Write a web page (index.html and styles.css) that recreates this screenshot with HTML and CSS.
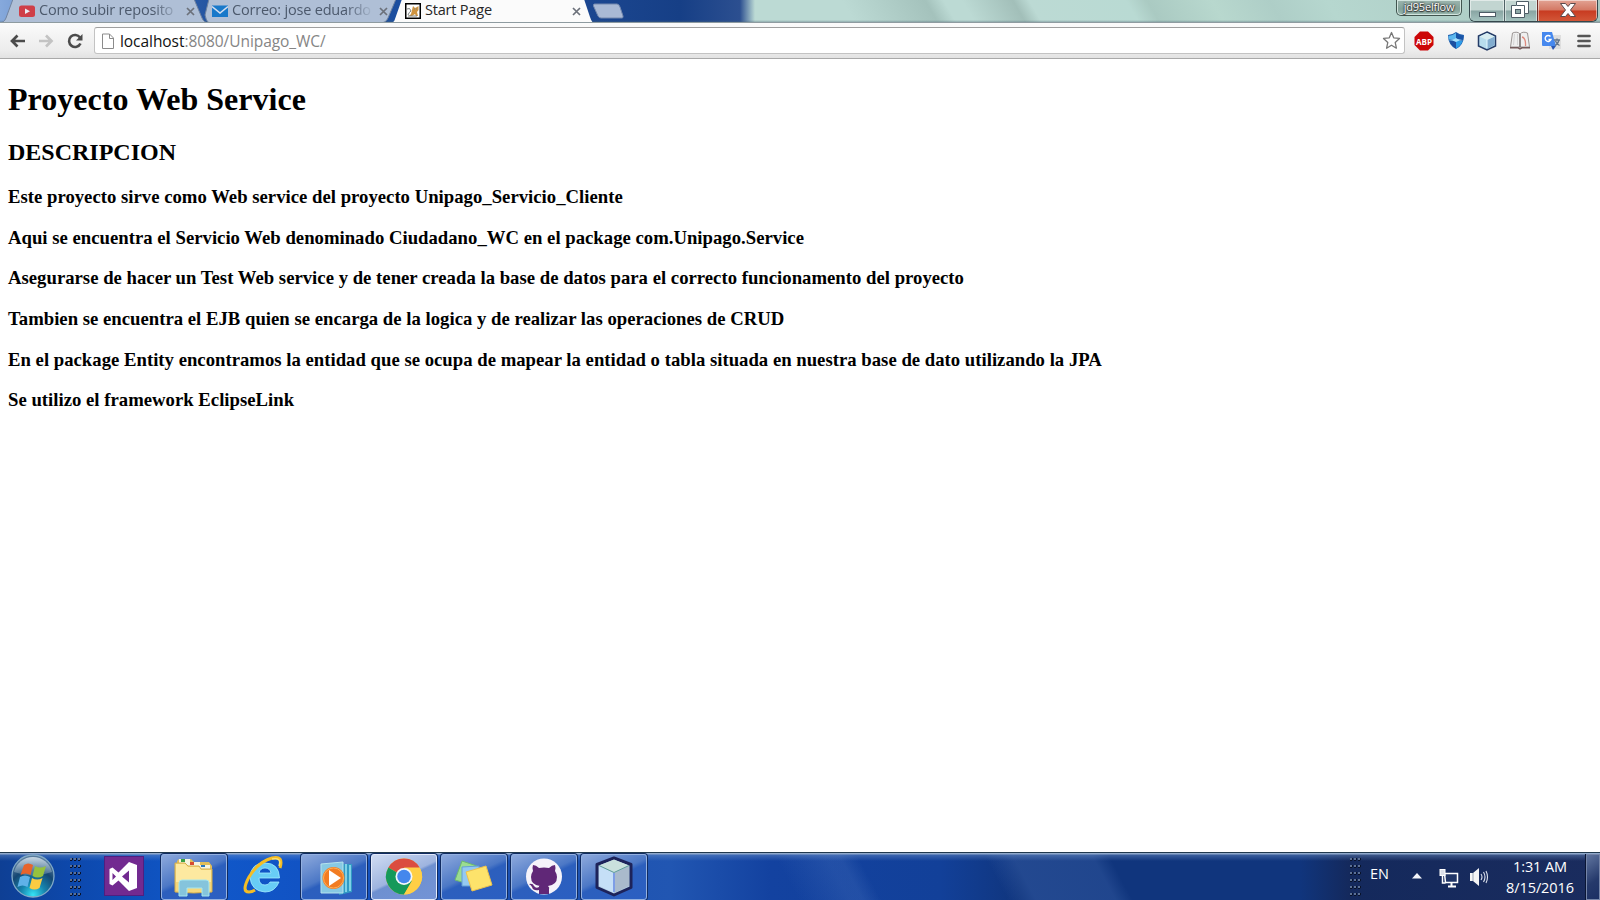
FILE: index.html
```html
<!DOCTYPE html>
<html lang="es">
<head>
<meta charset="utf-8">
<title>Start Page</title>
<link rel="stylesheet" href="styles.css">
</head>
<body>
<div class="desktop">
  <header class="titlebar">
    <div class="tabs">
      <div class="tab tab-one">
        <svg class="tab-shape" width="206" height="23"><path class="shape-idle" d="M-1 23Q4 23 6 18L13 -1H194L202 18Q204 23 209 23Z"/></svg>
        <svg class="fav" width="16" height="16"><rect y="2.500" width="16" height="11.500" rx="2.500" fill="#cf3f49"/><path d="M6 5.500v5.500l5-2.750z" fill="#e9edf5"/></svg>
        <span class="tab-text faded">Como subir reposito</span>
        <svg class="close" width="9" height="9"><path d="M1 1l7 7M8 1l-7 7"/></svg>
      </div>
      <div class="tab tab-two">
        <svg class="tab-shape" width="194" height="23"><path class="shape-idle" d="M5 23Q2 21 1 15L5 -1H192L184 18Q182 23 176 23Z"/></svg>
        <svg class="fav" width="16" height="16"><rect y="2.500" width="16" height="11.500" fill="#1979ca"/><path d="M0 3.500l8 6.500l8-6.500" fill="none" stroke="#d3def0" stroke-width="1.600"/></svg>
        <span class="tab-text faded">Correo: jose eduardo</span>
        <svg class="close" width="9" height="9"><path d="M1 1l7 7M8 1l-7 7"/></svg>
      </div>
      <div class="tab tab-active">
        <svg class="tab-shape" width="206" height="24"><path class="shape-active" d="M-1 23Q3 23 4 19L11 -1H193L199 17Q201 23 203 23V24H-1Z"/></svg>
        <svg class="fav" width="16" height="16"><rect x=".75" y=".75" width="14.500" height="14.500" fill="#fff" stroke="#000" stroke-width="1.500"/><path d="M7 7l1-4l2 2l2-1l1.500-1v4l-1.500 2l1 4h-2l-1-2l-3 2H4l2-2z" fill="#cf9440"/><path d="M2 6q3-2 4 2q-2 1-3 4M3 13h9M9 6h1M11 6h1" stroke="#7b8180" fill="none"/></svg>
        <span class="tab-text">Start Page</span>
        <svg class="close" width="9" height="9"><path d="M1 1l7 7M8 1l-7 7"/></svg>
      </div>
      <svg class="new-tab" width="32" height="16"><path d="M2.500 1H25q2 0 3 3l3 9q.5 2-1 2H9q-2 0-3-2L1.500 3q-.5-2 1-2z" fill="#a9b9d5" stroke="#7287ad"/></svg>
    </div>
    <div class="user">jd95elflow</div>
    <div class="controls">
      <div class="ctl min"><svg width="34" height="22"><rect x="9.500" y="12.500" width="16" height="4" fill="#fff" stroke="#4d5c66"/></svg></div>
      <div class="ctl max"><svg width="34" height="22"><path fill-rule="evenodd" d="M11.500 1.500h12v12h-4v4h-13v-12h5z" fill="#fff" stroke="#4d5c66"/><rect x="10.500" y="9.500" width="5" height="4" fill="#8fa9a8" stroke="#4d5c66"/><path d="M12 5.500h7.500v8" fill="none" stroke="#4d5c66"/></svg></div>
      <div class="ctl shut"><svg width="58" height="22"><path d="M22.500 3.500h5l2.500 3l2.500-3h5l-5 6.500l5 6.500h-5l-2.500-3l-2.500 3h-5l5-6.500z" fill="#fff" stroke="#5b4a4c"/></svg></div>
    </div>
  </header>

  <nav class="toolbar">
    <svg class="nav-icon" width="16" height="16"><path d="M16 8H3M8.500 2.500L3 8l5.500 5.500" fill="none" stroke="#4b4b4b" stroke-width="2.700"/></svg>
    <svg class="nav-icon" width="16" height="16"><path d="M1 8h12M8 2.500L13.500 8L8 13.500" fill="none" stroke="#c3c3c3" stroke-width="2.700"/></svg>
    <svg class="nav-icon" width="16" height="16"><path d="M13 4.500A6 6 0 1 0 13.500 10.500" fill="none" stroke="#4b4b4b" stroke-width="2.600"/><path d="M15.500 1v6.500H9z" fill="#4b4b4b"/></svg>
    <div class="address">
      <svg width="12" height="16"><path d="M.5 1h7l4 4v10.500H.5z" fill="#fff" stroke="#8b8b8b"/><path d="M7.500 1v4.500h4" fill="none" stroke="#8b8b8b"/></svg>
      <span class="url"><span class="host">localhost</span>:8080/Unipago_WC/</span>
      <svg class="star" width="19" height="19"><path d="M9.500 1.500l2.200 5.300l5.800.6l-4.300 4l1.200 5.800l-4.900-3l-4.900 3l1.200-5.800l-4.300-4l5.800-.6z" fill="#fff" stroke="#777" stroke-width="1.300" stroke-linejoin="round"/></svg>
    </div>
    <div class="extensions">
      <svg width="20" height="20"><path d="M6 0.500h8l5.500 5.500v8L14 19.500H6L.5 14V6z" fill="#cc0708"/><text x="10" y="13.500" text-anchor="middle" textLength="16" lengthAdjust="spacingAndGlyphs" class="abp">ABP</text></svg>
      <svg width="18" height="19"><path d="M9 1q4 3 8 3q0 10-8 14q-8-4-8-14q4 0 8-3z" fill="#1f5fae"/><path d="M9 2q-4 3-7.500 3q0 2 .5 3.500h7z" fill="#5cb8ee"/><path d="M9 2v6.500h7q.5-2 .5-3.500Q12 5 9 2z" fill="#1a55a8"/><path d="M3 10h6v7.500Q4 15 3 10z" fill="#1d4fa0"/><path d="M9 10h6.500Q14 15 9 17.500z" fill="#2e9ce8"/><path d="M0 9q6 0 9-2q3 2 9 2q-6 0-9 2q-3-2-9-2z" fill="#a6e0fc"/></svg>
      <svg width="20" height="20"><path d="M10 1l8.500 4v10L10 19l-8.500-4V5z" fill="#b8dced" stroke="#243b67" stroke-width="1.500"/><path d="M10 9v9l7.500-4V5.500z" fill="#83adcf"/><path d="M2.500 5.500L10 9l7.500-3.500L10 2z" fill="#d9edf1"/><path d="M10 9v8" stroke="#e4f7ff"/></svg>
      <svg width="20" height="19"><path d="M2.500 2q5-2 7.500 1q2.500-3 7.500-1l2 14H.5z" fill="#efefef" stroke="#9b9594"/><path d="M10 3v13" stroke="#706968" stroke-width="1.500"/><path d="M0 16.800h8l2 1l2-1h8" fill="none" stroke="#755b5b" stroke-width="1.600"/><path d="M12 6q4 1 3.500 9" fill="none" stroke="#df8a7d" stroke-width="1.300"/><path d="M4.500 3l-1 11M7.500 3v11" stroke="#d4d4d4"/></svg>
      <svg width="19" height="20"><rect x="7" y="4" width="12" height="14" fill="#dedede"/><path d="M0 1h10l4 14H1q-1 0-1-1z" fill="#4688ee"/><path d="M9 15h5l-3 4z" fill="#2957b4"/><path d="M8.500 5.500a3 3 0 1 0 .5 3H6.500" fill="none" stroke="#fff" stroke-width="1.400"/><path d="M12 9h6M15 7.500v1.500M17 9q-1 4-4 5.500M13.500 10q1 3 4 4.500" stroke="#63758b" fill="none" stroke-width="1.300"/></svg>
      <svg class="menu" width="14" height="14"><path d="M1.500 2h11M1.500 7h11M1.500 12h11" stroke="#555" stroke-width="2.700" stroke-linecap="round"/></svg>
    </div>
  </nav>

  <main class="page">
    <h1>Proyecto Web Service</h1>
    <h2>DESCRIPCION</h2>
    <h3>Este proyecto sirve como Web service del proyecto Unipago_Servicio_Cliente</h3>
    <h3>Aqui se encuentra el Servicio Web denominado Ciudadano_WC en el package com.Unipago.Service</h3>
    <h3>Asegurarse de hacer un Test Web service y de tener creada la base de datos para el correcto funcionamento del proyecto</h3>
    <h3>Tambien se encuentra el EJB quien se encarga de la logica y de realizar las operaciones de CRUD</h3>
    <h3>En el package Entity encontramos la entidad que se ocupa de mapear la entidad o tabla situada en nuestra base de dato utilizando la JPA</h3>
    <h3>Se utilizo el framework EclipseLink</h3>
  </main>

  <footer class="taskbar">
    <svg class="orb" width="46" height="46" viewBox="0 0 46 46">
      <defs>
        <radialGradient id="orb" cx=".5" cy=".95" r=".85"><stop offset="0" stop-color="#35e3f5"/><stop offset=".35" stop-color="#1683ad"/><stop offset=".7" stop-color="#154672"/><stop offset="1" stop-color="#577b9d"/></radialGradient>
        <linearGradient id="shine" x2="0" y2="1"><stop offset="0" stop-color="#dbe7ef" stop-opacity=".85"/><stop offset="1" stop-color="#8eabc2" stop-opacity=".35"/></linearGradient>
      </defs>
      <circle cx="23" cy="23" r="21" fill="url(#orb)" stroke="#82aac6" stroke-width="1.300"/>
      <path d="M4 19a19.500 19.500 0 0 1 38 0q-19 7-38 0z" fill="url(#shine)"/>
      <path d="M14 12q4-3 9 0l-2.500 10q-5-3-10 0z" fill="#e8642b"/>
      <path d="M25 13q5 3 11 0l-3 10q-5 3-10.500 0z" fill="#96c13e"/>
      <path d="M10 24q5-3 10 0l-2.500 10q-5-3-10 0z" fill="#5fb1e8"/>
      <path d="M22 25q5 3 10.500 0l-3 10q-5 3-10 0z" fill="#fbcb42"/>
    </svg>
    <div class="grip grip-left"></div>
    <svg class="vs" width="40" height="40"><rect width="40" height="40" fill="#722a90"/><rect x=".5" y=".5" width="39" height="39" fill="none" stroke="#4f1f80"/><path d="M25 6l8 3v23l-8 3l-10.500-10.500l-6 5l-3-1.500V13l3-1.500l6 5zM25 14.500l-7 6l7 6zM8.500 17v7l3.500-3.500z" fill="#fff" fill-rule="evenodd"/></svg>

    <div class="apps">
      <div class="app open"><svg width="42" height="42" viewBox="0 0 42 42"><path d="M4 6l2-2h12l3 3h15l3 4v25H4z" fill="#e1bd58"/><path d="M6 4h11v8H6zM15 7h12v8H15zM25 10h12v8H25z" fill="#f7f4df"/><path d="M8 4h4v3H8z" fill="#38a043"/><path d="M17 7h4v3h-4z" fill="#d64b32"/><path d="M28 10h4v2h-4z" fill="#2776bd"/><path d="M2 8h10l3 3h11l2 3h11v23q-18 2-37 0z" fill="#f5d77b" stroke="#d4ae4d"/><path d="M3 9h9l3 3h11l2 3h10v12H3z" fill="#ffedaa" opacity=".8"/><path d="M6 28q0-3 3-3h24q3 0 3 3v13h-7v-8H14v8H6z" fill="#85c4dc" stroke="#a6e6ef"/></svg></div>
      <div class="app"><svg width="42" height="42" viewBox="0 0 42 42"><path d="M36 28q-4 10-14 10Q8 37 7 23Q8 9 22 9q14 0 14.500 15H16q0 7 6 7q4 0 5-3zM16 19h12q-1-5-6-5t-6 5z" fill="#68cdf5" fill-rule="evenodd" stroke="#a2ecff" stroke-width=".8"/><path d="M37 14Q41 1 29 4Q15 8 6 23Q-2 38 6 38q3 0 6-2" fill="none" stroke="#f4bd25" stroke-width="3"/><path d="M36 12Q39 3 29 5" fill="none" stroke="#ffe36d" stroke-width="1.500"/></svg></div>
      <div class="app open"><svg width="42" height="42" viewBox="0 0 42 42"><path d="M26 9h13v28l-13 3z" fill="#329ac4"/><path d="M29 8v29M33 9v28M37 10v26" stroke="#87d7eb" stroke-width="1.800"/><path d="M8 9l22-2v31H8z" fill="#87c9e3" stroke="#b5e2ed"/><circle cx="20.500" cy="23" r="11" fill="#f27c22"/><circle cx="20.500" cy="23" r="10" fill="none" stroke="#ffae54"/><path d="M16 15v16l12-8z" fill="#fff"/></svg></div>
      <div class="app open current"><svg width="42" height="42" viewBox="0 0 42 42"><circle cx="21" cy="21.500" r="18" fill="#ffcd40"/><path d="M21 21.500L5.400 12.500A18 18 0 0 1 36.600 12.500z" fill="#db4c3f"/><path d="M21 21.500L5.400 12.500A18 18 0 0 0 21 39.500l8-14z" fill="#15995a"/><path d="M21 12.500h15.600A18 18 0 0 1 21 39.500l8-13z" fill="#ffcf46"/><circle cx="21" cy="21.500" r="8.500" fill="#f5f7fa"/><circle cx="21" cy="21.500" r="6.800" fill="#4487ed"/></svg></div>
      <div class="app open"><svg width="42" height="42" viewBox="0 0 42 42"><path d="M9 6l15 5l-5 19l-17-5z" fill="#9bdc91" stroke="#6cb96f"/><path d="M9 12l17-1l1 20l-18 0z" fill="#94c9f2" stroke="#639ed5"/><path d="M13 17l20-6l6 19l-20 6z" fill="#fde36b" stroke="#eec24c"/></svg></div>
      <div class="app open"><svg width="42" height="42" viewBox="0 0 42 42"><circle cx="21" cy="21.500" r="18" fill="#f5f3fa"/><path d="M10 10q3 0 6 3q5-1 10 0q3-3 6-3q1 3 0 6q2 3 2 6q0 8-9 9q2 2 1 3v5H16v-4q-6 1-7-3q-1-2-3-3q4-1 5 2q2 3 5 1q0-2 1-1q-9-1-9-9q0-3 2-6q-1-3 0-6z" fill="#602777"/></svg></div>
      <div class="app open"><svg width="42" height="42" viewBox="0 0 42 42"><path d="M21 3l17 6.500v23L21 40L4 32.500v-23z" fill="#adc9df" stroke="#1d235a" stroke-width="3" stroke-linejoin="round"/><path d="M6 10.500l15-6l15 6l-15 7z" fill="#cae1dd"/><path d="M6 11l15 7v20L6 31z" fill="#c5dff7"/><path d="M36 11l-15 7v20l15-7z" fill="#a9bacc"/><path d="M6 10.500l15 7l15-7" fill="none" stroke="#5f9d99"/><path d="M21 18v19" stroke="#7d9de6" stroke-width="2"/></svg></div>
    </div>

    <div class="tray">
      <div class="grip"></div>
      <span class="lang">EN</span>
      <svg class="up" width="10" height="6"><path d="M5 0l5 5.500H0z" fill="#f4f5fa"/></svg>
      <svg class="network" width="20" height="20"><path d="M5.500 5.500h13v9h-12z" fill="#203566" stroke="#fff" stroke-width="1.500"/><path d="M9 18.500h8M12.500 15v3" stroke="#fff" stroke-width="2"/><rect x="1" y="1.500" width="5" height="6" fill="#dce0e9" stroke="#fff"/><path d="M3.500 8v7h3" fill="none" stroke="#fff" stroke-width="1.500"/></svg>
      <svg class="speaker" width="20" height="20"><path d="M1 6h3l6-5v18l-6-5H1z" fill="#f4f4f5"/><path d="M4 6v8" stroke="#9ba6b6"/><path d="M12 7q2 3 0 6M14.500 5q3 5 0 10M17 4q3 6 0 12" fill="none" stroke="#dbe0ec" stroke-width="1.100"/></svg>
      <div class="clock"><span>1:31 AM</span><span>8/15/2016</span></div>
      <div class="peek"></div>
    </div>
  </footer>
</div>
</body>
</html>
```
FILE: styles.css
```css
* { box-sizing: border-box; }
body { margin: 0; background: #fff; }
svg { display: block; flex: none; }

.desktop {
  width: 1600px;
  height: 900px;
  display: flex;
  flex-direction: column;
  overflow: hidden;
}

/* window frame */
.titlebar {
  height: 23px;
  flex: none;
  display: flex;
  align-items: flex-start;
  overflow: hidden;
  border-bottom: 1px solid #8e9ba0;
  font-family: "Open Sans", "Noto Sans", sans-serif;
  background:
    linear-gradient(to bottom, transparent 20px, rgba(80, 105, 120, .4) 22px),
    linear-gradient(to right, #86a9dc 0, #5c86c4 60px, #20519f 220px, #1c4e9f 410px, #1b4690 590px, #163f86 680px, #2c4f90 740px, transparent 755px),
    linear-gradient(60deg, #bcdad4 740px, #a4c2bc 812px, #bcdad4 828px, #bcdad4 844px, #a2bfb9 888px, #bcdad4 902px, #b9dad3 986px, #aacac2 1004px, #b8d8ce 1060px, #aecec7 1110px, #b6d7cf 1160px, #a9c7c0 1390px);
}
.tabs { display: flex; flex: 1; height: 23px; }
.tab {
  position: relative;
  height: 23px;
  display: flex;
  align-items: flex-start;
  flex: none;
}
.tab-one { width: 204px; padding-left: 19px; z-index: 1; }
.tab-two { width: 187px; padding-left: 8px; }
.tab-active { width: 201px; padding-left: 14px; z-index: 2; }
.tab-shape { position: absolute; left: 0; top: 0; overflow: visible; }
.shape-idle { fill: #afbfd6; stroke: #71839f; stroke-width: 1; }
.shape-active { fill: #fbfbfb; }
.fav { position: relative; margin-top: 3px; }
.tab-text {
  position: relative;
  margin-left: 4px;
  height: 22px;
  font-size: 14.5px;
  letter-spacing: -.2px;
  line-height: 20px;
  color: #262626;
  white-space: nowrap;
  width: 142px;
}
.tab-one .tab-text, .tab-two .tab-text { color: #4c596c; }
.tab-active .tab-text { width: 147px; }
.faded { -webkit-mask-image: linear-gradient(to right, #000 80%, transparent 100%); mask-image: linear-gradient(to right, #000 80%, transparent 100%); }
.close { position: relative; margin: 7px 0 0 5px; }
.close path { stroke: #6c717a; stroke-width: 1.7; }
.tab-active .close { margin-left: 0; }
.new-tab { margin: 3px 0 0 0; }

.user {
  width: 66px;
  height: 16px;
  margin-right: 7px;
  border: 1px solid #41554f;
  border-top: 0;
  border-radius: 0 0 5px 5px;
  box-shadow: inset 0 0 0 1px #d3e5df;
  background: linear-gradient(#9db5ae, #83a299 60%, #9dbbb2);
  font-size: 11px;
  letter-spacing: -.2px;
  line-height: 13px;
  text-align: center;
  color: #fff;
  text-shadow: 0 0 2px #222, 0 0 2px #333, 0 1px 1px #333;
}
.controls {
  display: flex;
  width: 129px;
  height: 22px;
  margin-right: 2px;
  border: 1px solid #35474c;
  border-top: 0;
  border-radius: 0 0 6px 6px;
  overflow: hidden;
}
.ctl { height: 22px; flex: none; box-shadow: inset 0 0 0 1px rgba(255, 255, 255, .5); }
.min { width: 34px; background: linear-gradient(#c2d5d1 45%, #89a5a3 50%, #a6c5c1); }
.max { width: 33px; background: linear-gradient(#c2d5d1 45%, #89a5a3 50%, #a6c5c1); border-left: 1px solid #4f6266; }
.shut { width: 60px; background: linear-gradient(#e2a394, #d47965 45%, #c83b21 50%, #d3593a); border-left: 1px solid #6d2c27; }

/* browser toolbar */
.toolbar {
  height: 36px;
  flex: none;
  display: flex;
  align-items: center;
  padding: 0 9px 0 9px;
  background: linear-gradient(#fbfbfb, #ececec 80%, #e2e2e2);
  border-bottom: 1px solid #a9a9a9;
}
.nav-icon { margin-right: 13px; }
.address {
  width: 1311px;
  height: 27px;
  margin-left: -2px;
  display: flex;
  align-items: center;
  padding: 0 3px 0 7px;
  background: #fff;
  border: 1px solid #c3c3c3;
  border-top-color: #9f9f9f;
  border-radius: 3px;
}
.url {
  flex: 1;
  margin-left: 6px;
  font: 15.5px/24px "Open Sans", "Noto Sans", sans-serif;
  letter-spacing: -.06px;
  color: #858585;
}
.host { color: #111; }
.extensions {
  flex: 1;
  display: flex;
  align-items: center;
  gap: 12.5px;
  padding-left: 9px;
}
.menu { margin-left: 3px; }
.abp { font: bold 9.5px "Open Sans", sans-serif; fill: #fff; }

/* document */
.page {
  flex: 1;
  padding: 0 8px;
  overflow: hidden;
  font-family: "Liberation Serif", "Times New Roman", serif;
  color: #000;
}
.page h1 { margin: 21.44px 0; font-size: 32px; line-height: 38px; margin-bottom: 20.44px; letter-spacing: .03px; }
.page h2 { margin: 19.92px 0; font-size: 24px; line-height: 27px; }
.page h3 { margin: 18.72px 0; font-size: 18.72px; line-height: 22px; letter-spacing: .01px; }

/* taskbar */
.taskbar {
  height: 48px;
  flex: none;
  display: flex;
  align-items: flex-start;
  border-top: 1px solid #21394e;
  font-family: "Open Sans", "Noto Sans", sans-serif;
  color: #fff;
  background:
    linear-gradient(to bottom, #8fa8cb 0, #8fa8cb 1px, rgba(120, 155, 205, .4) 2px, transparent 8px),
    linear-gradient(62deg, transparent 705px, rgba(90, 130, 200, .22) 750px, rgba(90, 130, 200, .22) 762px, transparent 778px, transparent 890px, rgba(90, 130, 200, .25) 915px, rgba(90, 130, 200, .22) 985px, transparent 1000px),
    linear-gradient(to right, #0e3f94 0, #0d49ae 80px, #1058ca 200px, #1153c4 300px, #1a50b3 500px, #2156b2 670px, #1342a0 770px, #124099 940px, #10357d 1020px, #10357d 1300px, #14295c 1350px, #1a2c5e 1600px);
}
.orb { margin: 0 0 0 10px; }
.grip {
  width: 12px;
  height: 42px;
  background: radial-gradient(circle at 1px 1px, #7b93ba 0, #7b93ba .6px, #08122b 1px, #08122b 1.8px, transparent 2.2px) 0 0 / 4px 7px;
}
.grip-left { margin: 5px 22px 0 14px; }
.vs { margin: 3px 17px 0 0; }
.apps { display: flex; gap: 4px; padding-top: 1px; }
.app {
  width: 66px;
  height: 46px;
  display: flex;
  justify-content: center;
}
.open {
  border: 1px solid #94b1e0;
  border-radius: 3px;
  box-shadow: 0 0 0 1px #102b61;
  background: linear-gradient(155deg, #8da9dc 0, #4c78c6 45%, #2c5fbd 52%, #2b5fc2 100%);
}
.current { border-color: #e3eafa; background: linear-gradient(155deg, #d0dcf2 0, #9eb4df 48%, #6e90d0 52%, #7393d6 100%); }
.tray { display: flex; margin-left: auto; height: 47px; width: 250px; }
.tray .grip { margin-top: 5px; }
.lang { margin: 11px 0 0 8px; width: 21px; font-size: 14.5px; line-height: 20px; }
.up { margin: 20px 0 0 21px; }
.network { margin: 15px 0 0 17px; }
.speaker { margin: 14px 0 0 10px; }
.clock {
  width: 90px;
  margin-left: 6px;
  display: flex;
  flex-direction: column;
  align-items: center;
  padding-top: 3px;
  font-size: 14.5px;
  letter-spacing: -.1px;
}
.clock span { line-height: 21px; }
.peek {
  width: 14px;
  height: 46px;
  margin-left: auto;
  margin-top: 1px;
  border: 1px solid #7585a8;
  background: linear-gradient(145deg, #60759f, #25396b 60%, #1c3064);
  box-shadow: -1px 0 #0a1634;
}
```
